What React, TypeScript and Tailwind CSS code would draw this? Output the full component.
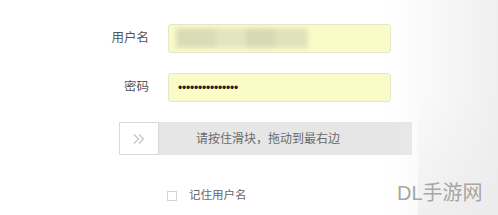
export default function App() {
  return (
    <div
      className="relative w-[498px] h-[215px] overflow-hidden bg-white text-[#555]"
      style={{ fontFamily: '"Liberation Sans", "Noto Sans CJK SC", sans-serif' }}
    >
      <div className="pt-[24px]">
        {/* username */}
        <div className="flex items-center">
          <label className="w-[149px] text-right text-[12.5px] text-[#555]">用户名</label>
          <div className="relative ml-[19px] w-[223px] h-[29px] rounded-[3px] border border-[#e4e6cf] bg-[#fafcc8] overflow-hidden">
            <div className="absolute left-[7px] top-[3px] flex blur-[2.5px]">
              <div className="w-[40px] h-[20px] bg-[#d9dcb6]" />
              <div className="w-[30px] h-[20px] bg-[#e2e5bf]" />
              <div className="w-[28px] h-[20px] bg-[#d6d9b3]" />
              <div className="w-[34px] h-[20px] bg-[#dfe2bb]" />
            </div>
          </div>
        </div>

        {/* password */}
        <div className="flex items-center mt-[20px]">
          <label className="w-[149px] text-right text-[12.5px] text-[#555]">密码</label>
          <div className="ml-[19px] w-[223px] h-[29px] rounded-[3px] border border-[#e4e6cf] bg-[#fafcc8] flex items-center pl-[9px]">
            <span className="text-[12px] text-[#222] tracking-[-0.2px]">•••••••••••••••</span>
          </div>
        </div>

        {/* slider */}
        <div className="ml-[119px] mt-[20px] w-[293px] h-[33px] bg-[#e6e6e6] flex items-center">
          <div className="w-[40px] h-[33px] bg-white border border-[#dadada] flex items-center justify-center">
            <svg width="14" height="12" viewBox="0 0 14 12" fill="none" stroke="#c2c2c2" strokeWidth="1.1">
              <path d="M2 1.5 L6.5 6 L2 10.5" />
              <path d="M7 1.5 L11.5 6 L7 10.5" />
            </svg>
          </div>
          <span className="ml-[37px] text-[12px] text-[#6a6a6a]">请按住滑块，拖动到最右边</span>
        </div>

        {/* remember */}
        <div className="ml-[167px] mt-[32px] flex items-center">
          <div className="w-[10px] h-[10px] border border-[#d4d4d4] bg-white" />
          <span className="ml-[12px] text-[11.5px] text-[#666]">记住用户名</span>
        </div>
      </div>

      {/* right-side shading */}
      <div className="pointer-events-none absolute right-0 top-0 h-full w-[110px] bg-gradient-to-r from-white/0 to-[#efefef]" />
      <div className="pointer-events-none absolute right-0 bottom-0 h-[120px] w-[80px] bg-gradient-to-b from-white/0 to-[#e9e9e9]/60" />

      {/* watermark */}
      <div className="absolute left-[397px] top-[178px] text-[20px] text-[#a6a6a6]">DL手游网</div>
    </div>
  );
}
